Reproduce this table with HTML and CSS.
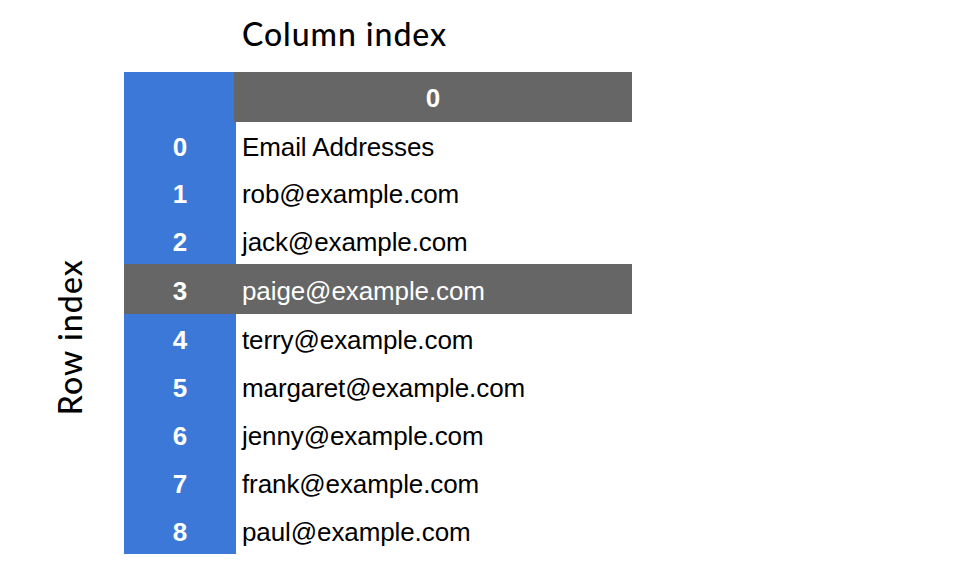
FILE: index.html
```html
<!DOCTYPE html>
<html>
<head>
<meta charset="utf-8">
<link rel="stylesheet" href="styles.css">
</head>
<body>
<div class="figure">
  <div class="corner"></div>
  <div class="col-title">Column index</div>
  <div class="row-label-wrap"><div class="row-label">Row index</div></div>
  <div class="table">
    <div class="head">
      <div class="head-idx"></div>
      <div class="head-cell">0</div>
    </div>
    <div class="row r-a"><div class="idx">0</div><div class="cell">Email Addresses</div></div>
    <div class="row r-a"><div class="idx">1</div><div class="cell">rob@example.com</div></div>
    <div class="row r-b"><div class="idx">2</div><div class="cell">jack@example.com</div></div>
    <div class="row sel"><div class="idx">3</div><div class="cell">paige@example.com</div></div>
    <div class="row"><div class="idx">4</div><div class="cell">terry@example.com</div></div>
    <div class="row"><div class="idx">5</div><div class="cell">margaret@example.com</div></div>
    <div class="row"><div class="idx">6</div><div class="cell">jenny@example.com</div></div>
    <div class="row"><div class="idx">7</div><div class="cell">frank@example.com</div></div>
    <div class="row"><div class="idx">8</div><div class="cell">paul@example.com</div></div>
  </div>
</div>
</body>
</html>
```
FILE: styles.css
```css
html, body {
  margin: 0;
  padding: 0;
  background: #ffffff;
}
.figure {
  display: grid;
  grid-template-columns: 124px 508px;
  grid-template-rows: 72px 482px;
  width: 970px;
  height: 574px;
}
.col-title {
  font-family: "Lato", "Inter", sans-serif;
  font-size: 32px;
  font-weight: 500;
  color: #000;
  padding-left: 118px;
  padding-top: 15px;
  line-height: 38px;
  letter-spacing: 0.95px;
}
.row-label-wrap {
  display: flex;
  align-items: center;
  justify-content: center;
  padding-left: 16px;
  padding-top: 48px;
}
.row-label {
  writing-mode: vertical-rl;
  transform: rotate(180deg);
  font-family: "Lato", "Inter", sans-serif;
  font-size: 32px;
  font-weight: 500;
  color: #000;
  letter-spacing: 1.1px;
  line-height: 34px;
}
.table {
  display: flex;
  flex-direction: column;
}
.head {
  display: flex;
  height: 50px;
}
.head-idx {
  width: 110px;
  background: #3c78d8;
}
.head-cell {
  width: 398px;
  padding-top: 2px;
  box-sizing: border-box;
  background: #666666;
  color: #ffffff;
  font-family: "Liberation Sans", Arial, sans-serif;
  font-weight: bold;
  font-size: 26px;
  display: flex;
  align-items: center;
  justify-content: center;
}
.row {
  display: flex;
  height: 48px;
  font-family: "Liberation Sans", Arial, sans-serif;
  font-size: 26px;
}
.row.r-a { height: 47px; }
.row.r-b { height: 48px; }
.row.sel { height: 50px; background: #666666; }
.idx {
  width: 112px;
  padding-top: 4px;
  box-sizing: border-box;
  background: #3c78d8;
  color: #ffffff;
  font-weight: bold;
  display: flex;
  align-items: center;
  justify-content: center;
}
.row.sel .idx { background: #666666; }
.cell {
  width: 396px;
  padding-left: 6px;
  padding-top: 4px;
  box-sizing: border-box;
  display: flex;
  align-items: center;
  color: #000000;
  letter-spacing: -0.1px;
}
.row.sel .cell { color: #ffffff; }
```
